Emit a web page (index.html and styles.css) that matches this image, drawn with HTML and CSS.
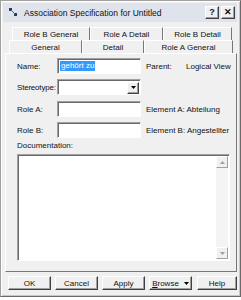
FILE: index.html
```html
<!DOCTYPE html>
<html>
<head>
<meta charset="utf-8">
<link rel="stylesheet" href="styles.css">
</head>
<body>
<div class="window">
  <div class="titlebar">
    <svg class="appicon" width="9" height="9" viewBox="0 0 9 9">
      <rect x="0" y="0" width="3" height="3" fill="#2a3a6a"/>
      <rect x="5" y="5" width="3" height="3" fill="#2a3a6a"/>
      <line x1="2" y1="2" x2="6" y2="6" stroke="#506080" stroke-width="1"/>
    </svg>
    <span class="title">Association Specification for Untitled</span>
    <div class="tbtn">?</div>
    <div class="tbtn close">✕</div>
  </div>
  <div class="tabs">
    <div class="tabrow back">
      <div class="tab t1">Role B General</div>
      <div class="tab t2">Role A Detail</div>
      <div class="tab t3">Role B Detail</div>
    </div>
    <div class="tabrow front">
      <div class="tab active f1">General</div>
      <div class="tab f2">Detail</div>
      <div class="tab f3">Role A General</div>
    </div>
  </div>
  <div class="panel">
    <div class="row">
      <span class="lbl">Name:</span>
      <div class="field"><span class="sel">gehört zu</span></div>
      <span class="info">Parent:</span>
      <span class="info2">Logical View</span>
    </div>
    <div class="row">
      <span class="lbl narrow">Stereotype:</span>
      <div class="field combo"><div class="dd"><svg width="5" height="3" viewBox="0 0 5 3"><path d="M0 0H5L2.5 3Z" fill="#000"/></svg></div></div>
    </div>
    <div class="row gap">
      <span class="lbl">Role A:</span>
      <div class="field"></div>
      <span class="info">Element A: Abteilung</span>
    </div>
    <div class="row">
      <span class="lbl">Role B:</span>
      <div class="field"></div>
      <span class="info">Element B: Angestellter</span>
    </div>
    <div class="doclbl">Documentation:</div>
    <div class="textarea">
      <div class="scroll">
        <div class="sbtn"><svg width="5" height="3" viewBox="0 0 5 3"><path d="M0 3H5L2.5 0Z" fill="#a0a0a0"/></svg></div>
        <div class="track"></div>
        <div class="sbtn"><svg width="5" height="3" viewBox="0 0 5 3"><path d="M0 0H5L2.5 3Z" fill="#a0a0a0"/></svg></div>
      </div>
    </div>
  </div>
  <div class="buttons">
    <div class="btn">OK</div>
    <div class="btn">Cancel</div>
    <div class="btn">Apply</div>
    <div class="btn"><span><u>B</u>rowse</span><svg width="5" height="3" viewBox="0 0 5 3"><path d="M0 0H5L2.5 3Z" fill="#000"/></svg></div>
    <div class="btn help">Help</div>
  </div>
</div>
</body>
</html>
```
FILE: styles.css
```css
* { box-sizing: border-box; }
html, body { margin: 0; padding: 0; }
body {
  width: 241px; height: 300px; overflow: hidden;
  font-family: "Liberation Sans", Arial, sans-serif;
  font-size: 8px; color: #111; background: #fff;
}
.window {
  width: 241px; height: 297px;
  background: #f0f0f0;
  border: 1px solid #a0a0a0;
  border-right-color: #6a6a6a;
  border-bottom-color: #6a6a6a;
  box-shadow: inset 1px 1px 0 #fff, inset -1px -1px 0 #c8c8c8;
  padding: 2px 3px 0 2px;
  display: flex; flex-direction: column;
}
.titlebar {
  height: 19px;
  background: #dfe4ec;
  display: flex; align-items: center;
  padding: 0 2px 0 6px;
}
.appicon { margin-right: 6px; }
.title { flex: 1; font-size: 8.5px; white-space: nowrap; }
.tbtn {
  width: 14px; height: 13px;
  background: #f0f0f0;
  border: 1px solid; border-color: #fff #404040 #404040 #fff;
  box-shadow: inset -1px -1px 0 #a0a0a0;
  font-weight: bold; font-size: 9px;
  display: flex; align-items: center; justify-content: center;
  line-height: 1;
}
.tbtn.close { margin-left: 2px; }
.tabs { margin-top: 5px; height: 26px; }
.tabrow { display: flex; height: 13px; }
.tabrow.back { padding-left: 9px; }
.tabrow.front { padding-left: 6px; }
.tab {
  border-top: 1px solid #fff;
  border-left: 1px solid #fff;
  border-right: 1px solid #777;
  display: flex; align-items: center; justify-content: center;
  padding-top: 1px;
  white-space: nowrap;
}
.t1 { width: 78px; }
.t2 { width: 73px; }
.t3 { width: 69px; }
.f1 { width: 73px; }
.f2 { width: 62px; }
.f3 { width: 89px; }
.tab.active { padding-bottom: 1px; }
.panel {
  flex: 1;
  margin: 0 0 0 2px;
  border: 1px solid; border-color: #fff #777 #777 #fff;
  padding: 4px 6px 6px 11px;
  display: flex; flex-direction: column;
}
.row { display: flex; align-items: center; height: 16px; margin-bottom: 5px; white-space: nowrap; }
.row.gap { margin-top: 1px; }
.lbl { width: 40px; flex-shrink: 0; }
.lbl.narrow { letter-spacing: -0.2px; }
.field {
  width: 84px; height: 16px; flex-shrink: 0;
  background: #fff;
  border: 1px solid; border-color: #a0a0a0 #fff #fff #a0a0a0;
  box-shadow: inset 1px 1px 0 #696969;
  padding: 2px 2px;
  display: flex; align-items: center;
}
.sel { background: #3399ff; color: #fff; padding: 0 1px; line-height: 10px; }
.combo { justify-content: flex-end; padding: 2px 1px 1px 2px; }
.dd {
  width: 12px; height: 12px;
  background: #f0f0f0;
  border: 1px solid; border-color: #fff #404040 #404040 #fff;
  box-shadow: inset -1px -1px 0 #a0a0a0;
  display: flex; align-items: center; justify-content: center;
}
.info { margin-left: 5px; width: 40px; flex-shrink: 0; }
.info2 { flex-shrink: 0; }
.doclbl { margin-top: -2px; height: 10px; }
.textarea {
  margin-top: 3px;
  width: 213px; height: 107px;
  background: #fff;
  border: 1px solid; border-color: #a0a0a0 #fff #fff #a0a0a0;
  box-shadow: inset 1px 1px 0 #696969;
  display: flex; justify-content: flex-end;
  padding: 1px 1px 1px 0;
}
.scroll {
  width: 12px; display: flex; flex-direction: column;
  background: #f4f4f4;
}
.sbtn {
  height: 12px; background: #f0f0f0;
  border: 1px solid; border-color: #fff #a0a0a0 #a0a0a0 #fff;
  display: flex; align-items: center; justify-content: center;
}
.track { flex: 1; }
.buttons {
  height: 24px;
  display: flex; align-items: center;
  padding: 0 0 2px 5px;
  gap: 4px;
}
.btn {
  width: 43px; height: 14px;
  background: #f0f0f0;
  border: 1px solid; border-color: #fff #404040 #404040 #fff;
  box-shadow: inset -1px -1px 0 #a0a0a0;
  display: flex; align-items: center; justify-content: center; gap: 5px;
}
.btn.help { margin-left: 1px; width: 40px; }
```
